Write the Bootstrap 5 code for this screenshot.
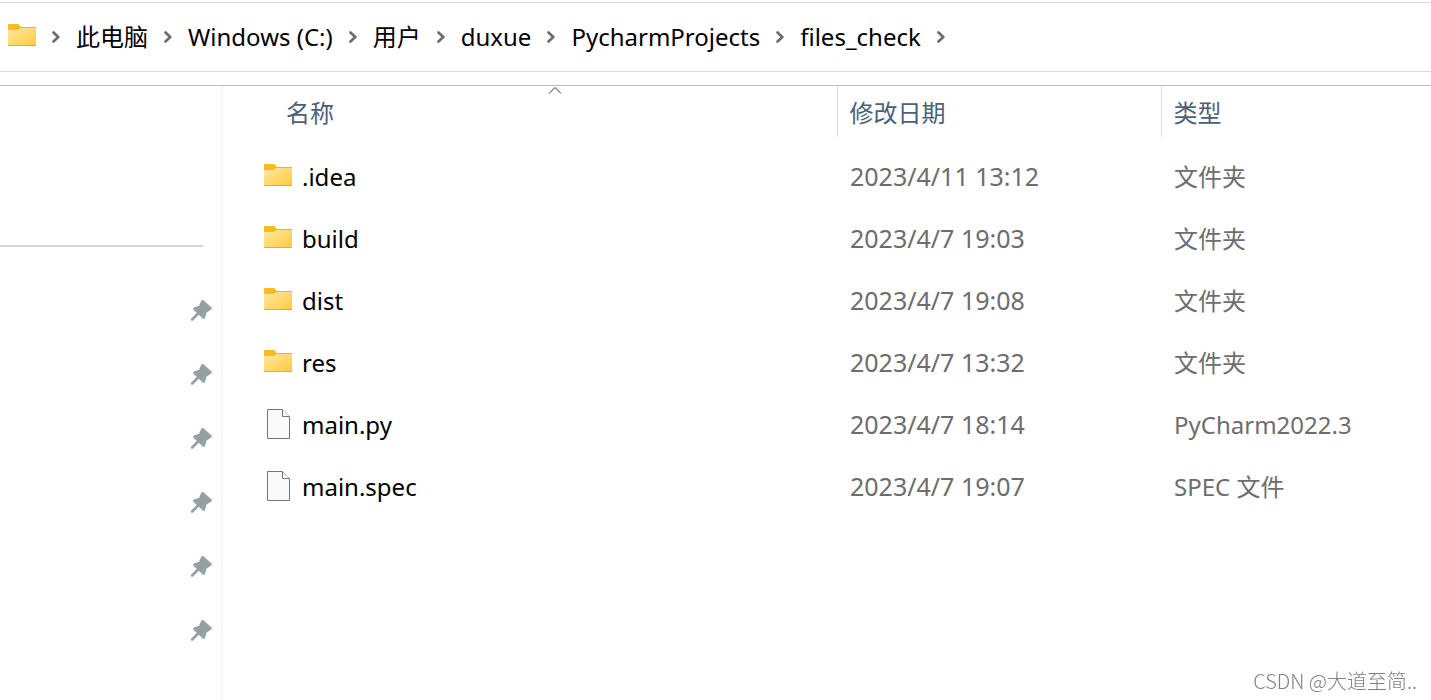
<!DOCTYPE html>
<html lang="zh-CN">
<head>
<meta charset="utf-8">
<meta name="viewport" content="width=device-width, initial-scale=1">
<title>files_check</title>
<link href="https://cdn.jsdelivr.net/npm/bootstrap@5.3.0/dist/css/bootstrap.min.css" rel="stylesheet">
<style>
  body { font-family: "Noto Sans", "Noto Sans CJK SC", sans-serif; font-size: 24px; line-height: 32px; color: #000; background: #fff; }
  .address { height: 70px; margin-top: 2px; border-top: 1px solid #d9d9d9; border-bottom: 1px solid #d9d9d9; padding-left: 8px; }
  .address a { color: #000; }
  .crumb-sep { width: 8px; height: 14px; margin: 0 16px; flex: none; }
  .folder { width: 28px; height: 24px; flex: none; margin-bottom: 4px; }
  .doc { width: 28px; height: 32px; flex: none; margin-bottom: 2px; }
  .file-name { gap: 10px; }
  .explorer { margin-top: 13px; border-top: 1px solid #bdbdbd; }
  .sidebar { width: 223px; flex: none; border-right: 2px solid #f7f7f7; }
  .sidebar hr { margin: 159px 18px 31px 0; border-top: 2px solid #d6d6d6; opacity: 1; }
  .sidebar li { height: 64px; padding-right: 8px; }
  .pin { width: 24px; height: 24px; }
  .files { table-layout: fixed; width: 100%; }
  .col-name { width: 614px; }
  .col-date { width: 324px; }
  .files th { height: 51px; padding: 0; font-weight: 400; border-left: 1px solid #e2e2e2; }
  .files th:first-child { border-left: 0; padding-left: 51px; }
  .files th button { height: 51px; padding: 2px 0 0 12px; color: #4c607a; }
  .sort-mark { width: 14px; height: 8px; top: 0; }
  .files tbody::before { content: ""; display: block; height: 9px; }
  .files td { height: 62px; padding: 0 0 0 13px; color: #6d6d6d; white-space: nowrap; }
  .files td:first-child { padding-left: 41px; color: #000; }
  .files td:nth-child(2) { font-size: 25px; padding-bottom: 2px; }
  .watermark { right: 14px; bottom: 5px; font: 300 20px/28px "Noto Sans CJK SC", sans-serif; color: #808080; }
</style>
</head>
<body class="d-flex flex-column min-vh-100 overflow-hidden">
<svg width="0" height="0" class="position-absolute" aria-hidden="true">
  <defs>
    <linearGradient id="folder-face" x1="0" y1="0" x2="1" y2="1">
      <stop offset="0" stop-color="#ffe9a2"/><stop offset="1" stop-color="#ffca3a"/>
    </linearGradient>
    <symbol id="i-folder" viewBox="0 0 28 24">
      <path d="M0 1.500Q0 1 1 1H9.500Q11 1 11.800 2.500L12.500 4H27Q28 4 28 5V10H0Z" fill="#fbbb1c"/>
      <path d="M12 4H27Q28 4 28 5H12Z" fill="#efb02a"/>
      <path d="M0 7H9Q10 7 11 6.200L12 5H28V22Q28 23 27 23H1Q0 23 0 22Z" fill="url(#folder-face)"/>
      <path d="M0 22H28Q28 23 27 23H1Q0 23 0 22Z" fill="#e9ab2b"/>
    </symbol>
    <symbol id="i-doc" viewBox="0 0 28 32">
      <path d="M3.500 1.500H18.500L25.500 8.500V30.500H3.500Z" fill="#fafafa" stroke="#767676"/>
      <path d="M18.500 1.500V8.500H25.500" fill="#fff" stroke="#767676"/>
    </symbol>
    <symbol id="i-sep" viewBox="0 0 8 14">
      <path d="M1.500 2.500L6.300 7L1.500 11.500" fill="none" stroke="#6b6b6b" stroke-width="2.600" stroke-linecap="round" stroke-linejoin="round"/>
    </symbol>
    <symbol id="i-pin" viewBox="0 0 24 24">
      <path d="M12.200 2.600Q13.500 1.300 14.800 2.600L22.300 9.300Q23.500 10.500 22 11.800L17.500 14.600L16.200 19.800Q15.300 21.600 13.800 20.500L9.800 16.700L4.200 22.400Q2.900 23.200 2.200 22.500Q1.500 21.600 2.200 20.600L7.800 14.900L4.500 11.700Q3.500 10.200 5 9.400L10.200 7.700Z" fill="#959fa6"/>
    </symbol>
  </defs>
</svg>

<nav class="address d-flex align-items-center" aria-label="路径">
  <svg class="folder" aria-hidden="true"><use href="#i-folder"/></svg>
  <ol class="list-unstyled d-flex align-items-center text-nowrap mb-0">
    <li class="d-flex align-items-center"><svg class="crumb-sep"><use href="#i-sep"/></svg><a class="text-decoration-none" href="#">此电脑</a></li>
    <li class="d-flex align-items-center"><svg class="crumb-sep"><use href="#i-sep"/></svg><a class="text-decoration-none" href="#">Windows (C:)</a></li>
    <li class="d-flex align-items-center"><svg class="crumb-sep"><use href="#i-sep"/></svg><a class="text-decoration-none" href="#">用户</a></li>
    <li class="d-flex align-items-center"><svg class="crumb-sep"><use href="#i-sep"/></svg><a class="text-decoration-none" href="#">duxue</a></li>
    <li class="d-flex align-items-center"><svg class="crumb-sep"><use href="#i-sep"/></svg><a class="text-decoration-none" href="#">PycharmProjects</a></li>
    <li class="d-flex align-items-center"><svg class="crumb-sep"><use href="#i-sep"/></svg><a class="text-decoration-none" href="#">files_check</a><svg class="crumb-sep"><use href="#i-sep"/></svg></li>
  </ol>
</nav>

<div class="explorer d-flex flex-grow-1">
  <aside class="sidebar">
    <hr>
    <ul class="list-unstyled mb-0">
      <li class="d-flex align-items-center justify-content-end"><svg class="pin"><use href="#i-pin"/></svg></li>
      <li class="d-flex align-items-center justify-content-end"><svg class="pin"><use href="#i-pin"/></svg></li>
      <li class="d-flex align-items-center justify-content-end"><svg class="pin"><use href="#i-pin"/></svg></li>
      <li class="d-flex align-items-center justify-content-end"><svg class="pin"><use href="#i-pin"/></svg></li>
      <li class="d-flex align-items-center justify-content-end"><svg class="pin"><use href="#i-pin"/></svg></li>
      <li class="d-flex align-items-center justify-content-end"><svg class="pin"><use href="#i-pin"/></svg></li>
    </ul>
  </aside>
  <main class="flex-grow-1">
    <table class="files">
      <colgroup><col class="col-name"><col class="col-date"><col></colgroup>
      <thead>
        <tr>
          <th scope="col" aria-sort="ascending"><button type="button" class="position-relative w-100 border-0 bg-transparent text-start">名称<svg class="sort-mark position-absolute start-50 translate-middle-x" viewBox="0 0 14 8" aria-hidden="true"><path d="M1 7.500L7 1.500L13 7.500" fill="none" stroke="#333"/></svg></button></th>
          <th scope="col"><button type="button" class="w-100 border-0 bg-transparent text-start">修改日期</button></th>
          <th scope="col"><button type="button" class="w-100 border-0 bg-transparent text-start">类型</button></th>
        </tr>
      </thead>
      <tbody>
        <tr><td><div class="file-name d-flex align-items-center"><svg class="folder"><use href="#i-folder"/></svg><span>.idea</span></div></td><td>2023/4/11 13:12</td><td>文件夹</td></tr>
        <tr><td><div class="file-name d-flex align-items-center"><svg class="folder"><use href="#i-folder"/></svg><span>build</span></div></td><td>2023/4/7 19:03</td><td>文件夹</td></tr>
        <tr><td><div class="file-name d-flex align-items-center"><svg class="folder"><use href="#i-folder"/></svg><span>dist</span></div></td><td>2023/4/7 19:08</td><td>文件夹</td></tr>
        <tr><td><div class="file-name d-flex align-items-center"><svg class="folder"><use href="#i-folder"/></svg><span>res</span></div></td><td>2023/4/7 13:32</td><td>文件夹</td></tr>
        <tr><td><div class="file-name d-flex align-items-center"><svg class="doc"><use href="#i-doc"/></svg><span>main.py</span></div></td><td>2023/4/7 18:14</td><td>PyCharm2022.3</td></tr>
        <tr><td><div class="file-name d-flex align-items-center"><svg class="doc"><use href="#i-doc"/></svg><span>main.spec</span></div></td><td>2023/4/7 19:07</td><td>SPEC 文件</td></tr>
      </tbody>
    </table>
  </main>
</div>
<div class="watermark position-fixed">CSDN @大道至简..</div>
<script src="https://cdn.jsdelivr.net/npm/bootstrap@5.3.0/dist/js/bootstrap.bundle.min.js"></script>
</body>
</html>
